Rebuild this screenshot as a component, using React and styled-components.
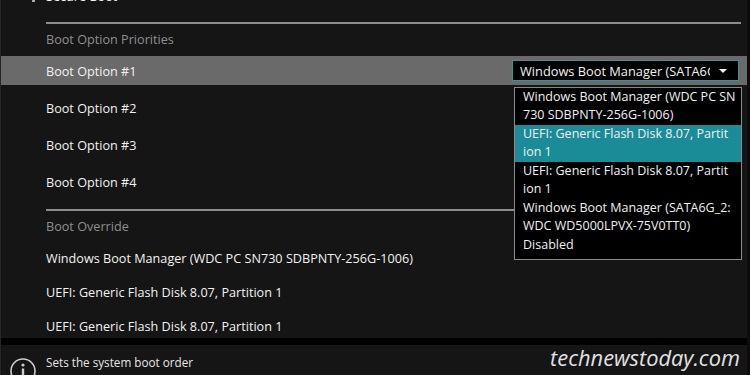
import styled, { createGlobalStyle } from "styled-components";

const GlobalStyle = createGlobalStyle`
  html, body {
    margin: 0;
    padding: 0;
    background: #151515;
  }
`;

const bootOptions = ["Boot Option #1", "Boot Option #2", "Boot Option #3", "Boot Option #4"];

const overrides = [
  "Windows Boot Manager (WDC PC SN730 SDBPNTY-256G-1006)",
  "UEFI: Generic Flash Disk 8.07, Partition 1",
  "UEFI: Generic Flash Disk 8.07, Partition 1",
];

// the firmware wraps these by width, mid-word
const choices = [
  { lines: ["Windows Boot Manager (WDC PC SN", "730 SDBPNTY-256G-1006)"] },
  { lines: ["UEFI: Generic Flash Disk 8.07, Partit", "ion 1"], active: true },
  { lines: ["UEFI: Generic Flash Disk 8.07, Partit", "ion 1"] },
  { lines: ["Windows Boot Manager (SATA6G_2:", "WDC WD5000LPVX-75V0TT0)"] },
  { lines: ["Disabled"] },
];

const App = () => {
  return (
    <>
      <GlobalStyle />
      <Page>
        <Main>
          <TopRow>
            <Tick />
            Secure Boot
          </TopRow>
          <Divider gap={12} />
          <SectionTitle>Boot Option Priorities</SectionTitle>
          {bootOptions.map((label, i) => (
            <OptionRow key={label} selected={i === 0}>
              <span>{label}</span>
              {i === 0 && (
                <Select>
                  <SelectText>Windows Boot Manager (SATA6G_2: WDC)</SelectText>
                  <Caret />
                </Select>
              )}
            </OptionRow>
          ))}
          <Divider gap={13} />
          <SectionTitle>Boot Override</SectionTitle>
          {overrides.map((label, i) => (
            <Item key={i}>{label}</Item>
          ))}

          <Popup>
            {choices.map((c, i) => (
              <Choice key={i} active={c.active}>
                {c.lines.map((l) => (
                  <div key={l}>{l}</div>
                ))}
              </Choice>
            ))}
          </Popup>
        </Main>
        <Band />
        <Footer>
          <InfoIcon width="30" height="30" viewBox="0 0 30 30">
            <circle cx="15" cy="15" r="12" fill="none" stroke="#cfcfcf" strokeWidth="1.6" />
            <circle cx="15" cy="9" r="1.6" fill="#cfcfcf" />
            <rect x="13.8" y="12.5" width="2.4" height="10" fill="#cfcfcf" />
          </InfoIcon>
          <Help>Sets the system boot order</Help>
          <Watermark>technewstoday.com</Watermark>
        </Footer>
      </Page>
    </>
  );
};

const Page = styled.div`
  width: 750px;
  height: 375px;
  overflow: hidden;
  background: #151515;
  display: flex;
  flex-direction: column;
  font-family: "Open Sans", "Noto Sans", sans-serif;
  color: #f2f2f2;
  border-left: 1px solid #262626;
  border-right: 3px solid #0c0c0c;
  box-sizing: border-box;
`;

const Main = styled.div`
  position: relative;
  height: 338px;
  overflow: hidden;
  display: flex;
  flex-direction: column;
`;

const TopRow = styled.div`
  height: 22px;
  margin-top: -15px;
  margin-bottom: 3px;
  padding-left: 45px;
  display: flex;
  align-items: center;
  font-size: 12.65px;
  position: relative;
  flex-shrink: 0;
`;

const Tick = styled.span`
  position: absolute;
  left: 31px;
  top: 15px;
  width: 3px;
  height: 2px;
  background: #aaa;
`;

const Divider = styled.div`
  height: 2px;
  margin: ${(p) => p.gap}px 6px 0 45px;
  background: #8c8c8c;
  flex-shrink: 0;
`;

const SectionTitle = styled.div`
  height: 30px;
  padding-left: 45px;
  display: flex;
  align-items: center;
  font-size: 12.65px;
  color: #8f8f8f;
  flex-shrink: 0;
`;

const OptionRow = styled.div`
  height: 29px;
  margin-top: ${(p) => (p.selected ? "2px" : "8px")};
  padding: 0 8px 0 45px;
  display: flex;
  align-items: center;
  justify-content: space-between;
  font-size: 12.65px;
  background: ${(p) => (p.selected ? "#6a6a6a" : "transparent")};
  flex-shrink: 0;
`;

const Select = styled.div`
  width: 227px;
  height: 21px;
  box-sizing: border-box;
  background: #000;
  border: 1px solid #2a9aa2;
  display: flex;
  align-items: center;
  padding: 0 11px 0 7px;
`;

const SelectText = styled.span`
  overflow: hidden;
  white-space: nowrap;
  font-size: 12.8px;
  color: #f2f2f2;
  width: 190px;
`;

const Caret = styled.span`
  width: 0;
  height: 0;
  margin-left: auto;
  border-left: 4px solid transparent;
  border-right: 4px solid transparent;
  border-top: 4px solid #f2f2f2;
`;

const Item = styled.div`
  height: 34px;
  padding-left: 45px;
  display: flex;
  align-items: center;
  font-size: 12.65px;
  flex-shrink: 0;
`;

const Popup = styled.div`
  position: absolute;
  left: 513px;
  top: 87px;
  width: 228px;
  height: 173px;
  box-sizing: border-box;
  background: #000;
  border: 1px solid #8a8a8a;
  overflow: hidden;
`;

const Choice = styled.div`
  padding: 0 2px 1px 8px;
  font-size: 12.5px;
  line-height: 18px;
  white-space: nowrap;
  color: #f0f0f0;
  background: ${(p) => (p.active ? "#1a8c97" : "transparent")};
`;

const Band = styled.div`
  height: 7px;
  background: #000;
  flex-shrink: 0;
`;

const Footer = styled.div`
  flex: 1;
  position: relative;
  display: flex;
  align-items: center;
  padding: 0 7px 0 45px;
`;

const InfoIcon = styled.svg`
  position: absolute;
  left: 7px;
  top: 11px;
`;

const Help = styled.span`
  font-size: 11.7px;
  color: #e6e6e6;
  margin-top: 4px;
`;

const Watermark = styled.span`
  margin-left: auto;
  font-size: 21.8px;
  font-style: italic;
  color: #e2e2e2;
  margin-top: -6px;
`;

export default App;
